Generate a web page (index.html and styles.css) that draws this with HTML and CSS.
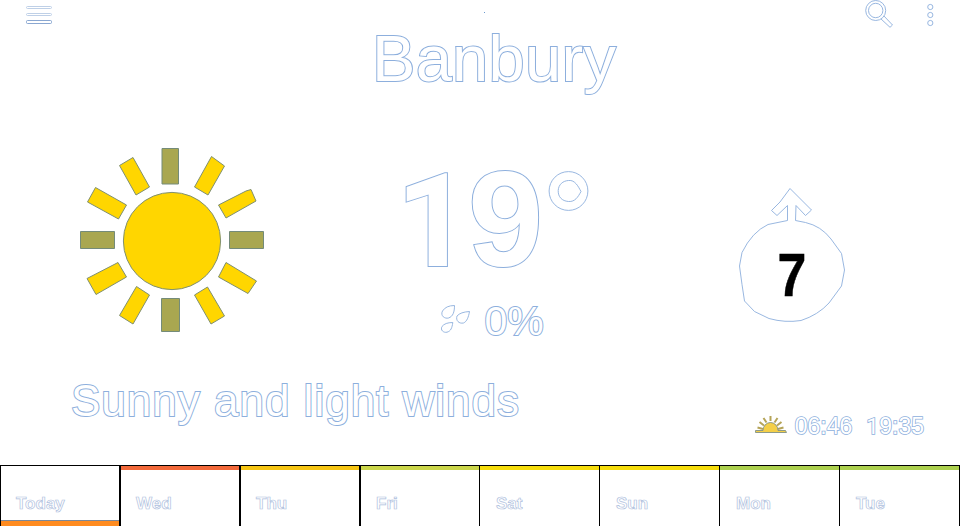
FILE: index.html
```html
<!DOCTYPE html>
<html lang="en">
<head>
<meta charset="utf-8">
<title>Banbury</title>
<link rel="stylesheet" href="styles.css">
</head>
<body>
<header class="bar">
  <svg class="menu line" width="28" height="26" viewBox="25 0 28 26">
    <rect x="26.5" y="6.5" width="25" height="2" rx="1"/>
    <rect x="26.5" y="13.5" width="25" height="2" rx="1"/>
    <rect class="strong" x="26.5" y="20.5" width="25" height="3" rx="1"/>
  </svg>
  <svg class="speck" width="2" height="14"><rect x="0" y="12" width="1" height="1"/></svg>
  <svg class="search line" width="30" height="29" viewBox="864 0 30 29">
    <path d="M880.500 18.500 890 27.300 892.500 25 883.500 15.500Z"/>
    <circle cx="875.7" cy="10.5" r="10"/>
    <circle cx="875.7" cy="10.5" r="7.2"/>
  </svg>
  <svg class="more line" width="8" height="28" viewBox="926 0 8 28">
    <circle cx="930.3" cy="7" r="2.6"/><circle cx="930.3" cy="15" r="2.6"/><circle cx="930.3" cy="23" r="2.6"/>
  </svg>
</header>
<h1 class="city outline">Banbury</h1>
<main class="now">
  <svg class="sun" width="206" height="200" viewBox="70 140 206 200">
    <circle cx="172" cy="241" r="48.6"/>
    <path class="dim" d="M162 148.5h16.5v35.5H162zM161.5 298.5h18v33h-18zM80.5 231.5h34v17h-34zM229.500 231.500h34v17h-34z"/>
    <path d="M119.500 165.500 133 157.500 149.500 187 136 195zM211.500 156.500 224.500 166 208 195 194.500 187zM95.500 187.500 126.500 205 118.500 219 87.500 202zM251 189.500 256 201 226 218 218.500 205 246 191zM87 278.500 118 262.500 126.500 277 96 294.500zM226 262.500 256.500 281 248 293.500 218.500 277zM136.500 286.500 149.500 295 133 324 119.500 315.500zM207.500 287 224.500 316 211 324 194.500 295z"/>
  </svg>
  <section class="reading">
    <div class="temp"><span class="outline"><span class="one">1</span>9</span><svg class="degree line" width="42" height="42" viewBox="548 170 42 42"><circle cx="568.500" cy="191" r="19.400"/><path d="M568.500 180.500C575 179.500 578.500 187 581 191.500 578 197 575 202 568.500 201.500 562 201 558 197 558.200 190.500 558.500 184.500 563 180.800 568.500 180.500Z"/></svg></div>
    <div class="rain">
      <svg class="line" width="30" height="30" viewBox="441 304 30 30">
        <path d="M454.500 305.500Q446 305.500 442.500 311C440 316 445 319 448.500 318 453 316.500 454.500 312 454.500 305.500ZM469.500 311.500Q460.500 312 457 316C455.500 320.500 459 324 463.500 323 467 321.500 468.500 317 469.500 311.500ZM452.800 322.500Q445 322.500 442 326.500C440 330 443.500 333 447 332.200 451 331 452 328 452.800 322.500Z"/>
      </svg>
      <span class="chance outline">0%</span>
    </div>
  </section>
  <svg class="wind line" width="125" height="150" viewBox="730 180 125 150">
    <path d="M790 188.500 811.500 210 805.500 215.500 796 205.500 795.500 220.500 805.500 222.500Q821 226 831 239L841.500 253.500 844.500 270 841.500 286 829 303Q818 315 801 320.500 785 323 769 318.500L754.500 311.500 744.500 301 742 284.500 739.500 266 742 252.500Q752 232 768 224.500L787.500 220.500V205.500L777 215.500 771.500 210.500 780 202Z"/>
    <text class="speed" transform="translate(777.400 295.600) scale(.85 1)">7</text>
  </svg>
</main>
<section class="summary">
  <p class="words outline">Sunny and light winds</p>
  <div class="hours">
    <svg class="rise" width="34" height="20" viewBox="753 415 34 20">
      <path class="rays" d="M762 429 756.500 427.500M763 425.500 758.500 422M765.500 422.500 762.500 418M769.500 421V416M773.500 422.500 776.500 418M776 425.500 780.500 422M777 429 782.500 427.500"/>
      <path d="M762 430.500A7.500 8 0 0 1 777 430.500H784.500L785.500 432.500H754.500V430.500Z"/>
    </svg>
    <span class="time outline">06:46</span><span class="time outline"><span class="small-one">1</span>9:35</span>
  </div>
</section>
<nav class="days">
  <div class="day today"><span>Today</span></div>
  <div class="day red"><span>Wed</span></div>
  <div class="day amber"><span>Thu</span></div>
  <div class="day lime"><span>Fri</span></div>
  <div class="day yellow"><span>Sat</span></div>
  <div class="day yellow"><span>Sun</span></div>
  <div class="day green"><span>Mon</span></div>
  <div class="day green"><span>Tue</span></div>
</nav>
</body>
</html>
```
FILE: styles.css
```css
* { box-sizing: border-box; }
body { margin: 0; width: 960px; height: 526px; overflow: hidden; background: #fff; font-family: "Liberation Sans", Arial, sans-serif; display: flex; flex-direction: column; }
svg { display: block; flex: none; }
h1, p { margin: 0; }
.outline { color: #fff; -webkit-text-stroke: 2px #8dafdd; paint-order: stroke fill; white-space: nowrap; }
.line { fill: #fff; stroke: #8dafdd; stroke-width: .9; }
.bar { display: flex; height: 30px; flex: none; padding-left: 25px; }
.menu { stroke: #b8cbe4; }
.strong { stroke: #7d9dcc; }
.speck { margin-left: 431px; fill: #6c9ace; }
.search { margin-left: 378px; }
.more { margin-left: 32px; }
.city { height: 57px; line-height: 58px; flex: none; padding-left: 372px; font-size: 65px; font-weight: 400; letter-spacing: .3px; }
.now { display: flex; height: 283px; flex: none; padding: 1px 0 0 70px; }
.sun { margin-top: 52px; fill: #ffd600; stroke: #7f9071; stroke-width: 1; }
.dim { fill: #a9a750; stroke: #748b79; }
.reading { width: 220px; margin-left: 121px; padding-top: 57px; }
.temp { display: flex; height: 150px; line-height: 150px; font-size: 135px; font-weight: 700; }
.temp .outline { width: 151px; margin-left: -1px; }
.one { display: inline-block; width: 72px; font: 700 130px/1 Roboto, sans-serif; }
.small-one { display: inline-block; width: 13px; font: 400 22.5px/1 Roboto, sans-serif; }
.degree { margin: 25px 0 0 1px; }
.rain { display: flex; margin: 9px 0 0 44px; }
.chance { font-size: 41px; line-height: 35px; margin-left: 13.5px; }
.wind { margin: 92px 0 0 113px; }
.speed { font-size: 61px; font-weight: 700; fill: #000; stroke: #000; stroke-width: .5; }
.summary { display: flex; justify-content: space-between; height: 95px; flex: none; padding: 0 36px 0 71px; }
.words { font-size: 44px; line-height: 62px; letter-spacing: 1px; }
.hours { display: flex; padding-top: 45px; }
.rise { fill: #f4cf48; stroke: #718782; stroke-width: .8; }
.rays { stroke: #b5a458; stroke-width: 2; }
.time { font-size: 23px; line-height: 22px; margin-left: 7px; -webkit-text-stroke-width: 1.6px; }
.time + .time { margin-left: 14px; }
.days { display: grid; grid-template-columns: repeat(8, 120px); height: 61px; flex: none; border-top: 1px solid #000; }
.day { border-right: 1px solid #000; padding: 28px 0 0 16px; font-size: 17px; line-height: 20px; font-weight: 700; color: #fff; -webkit-text-stroke: .7px #b0c1de; background: linear-gradient(var(--tone), var(--tone)) top / 100% 4px no-repeat; }
.day:nth-child(-n+4) { border-left: 1px solid #000; padding-left: 15px; }
.today { background: linear-gradient(#7d8796 0 1px, #ff8b1f 1px) bottom / 100% 6px no-repeat; }
.red { --tone: #f2693a; }
.amber { --tone: #f6c513; }
.lime { --tone: #cbd64a; }
.yellow { --tone: #f5dc0b; }
.green { --tone: #acd04e; }
```
